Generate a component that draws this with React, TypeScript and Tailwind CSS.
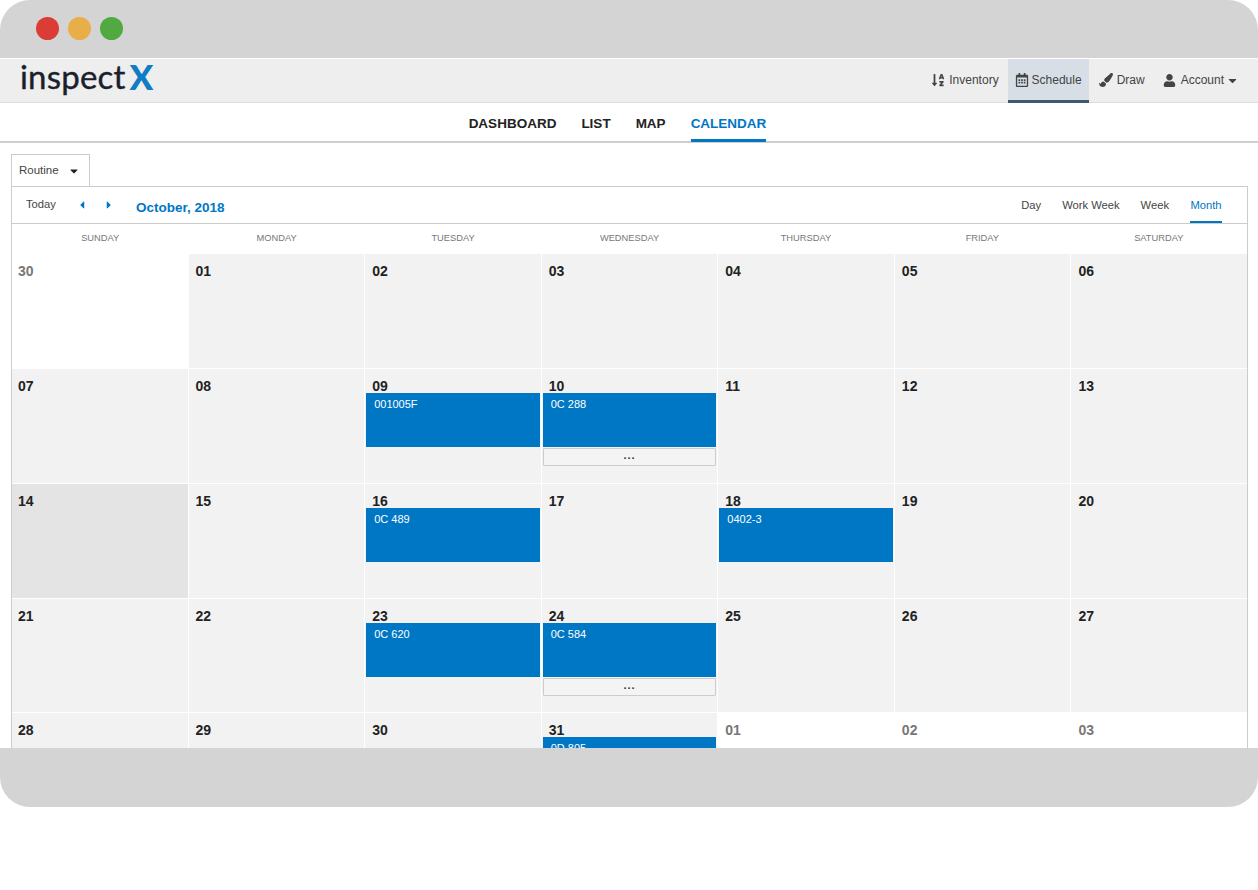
import { FaSortAlphaDown, FaRegCalendarAlt, FaPaintBrush, FaUser, FaCaretDown, FaCaretLeft, FaCaretRight } from "react-icons/fa";

type Day = { label: string; muted?: boolean; white?: boolean; dark?: boolean; event?: string; more?: boolean };

const weekdays = ["SUNDAY", "MONDAY", "TUESDAY", "WEDNESDAY", "THURSDAY", "FRIDAY", "SATURDAY"];

const days: Day[] = [
  { label: "30", muted: true, white: true },
  { label: "01" }, { label: "02" }, { label: "03" }, { label: "04" }, { label: "05" }, { label: "06" },
  { label: "07" }, { label: "08" },
  { label: "09", event: "001005F" },
  { label: "10", event: "0C 288", more: true },
  { label: "11" }, { label: "12" }, { label: "13" },
  { label: "14", dark: true }, { label: "15" },
  { label: "16", event: "0C 489" },
  { label: "17" },
  { label: "18", event: "0402-3" },
  { label: "19" }, { label: "20" },
  { label: "21" }, { label: "22" },
  { label: "23", event: "0C 620" },
  { label: "24", event: "0C 584", more: true },
  { label: "25" }, { label: "26" }, { label: "27" },
  { label: "28" }, { label: "29" }, { label: "30" },
  { label: "31", event: "0D 805" },
  { label: "01", muted: true, white: true },
  { label: "02", muted: true, white: true },
  { label: "03", muted: true, white: true },
];

const DayCell = ({ day, first }: { day: Day; first: boolean }) => {
  const bg = day.white ? "bg-white" : day.dark ? "bg-[#e4e4e4]" : "bg-[#f2f2f2]";
  return (
    <div className={`h-[113.85px] ${bg} px-px`}>
      <div
        className={`${first ? "pl-[5px]" : "pl-[6px]"} pt-[10px] h-[24px] text-[14px] leading-[14px] font-bold ${
          day.muted ? "text-[#777777]" : "text-[#222222]"
        }`}
      >
        {day.label}
      </div>
      {day.event && (
        <div className="h-[54px] bg-[#0077c5] pl-[8px] pt-[4px] text-[11px] leading-[14px] text-white">{day.event}</div>
      )}
      {day.more && (
        <div className="mt-px h-[18px] flex items-center justify-center border border-[#cccccc] bg-[#f4f4f4] rounded-[1px] text-[11px] font-bold tracking-[1px] text-[#333333] leading-none pb-[3px]">
          ...
        </div>
      )}
    </div>
  );
};

export default function App() {
  return (
    <div className="w-[1258px] h-[890px] bg-white font-['Liberation_Sans',Arial,sans-serif]">
      <div className="h-[807px] rounded-[30px] overflow-hidden flex flex-col bg-white">
        {/* window chrome */}
        <div className="h-[58px] shrink-0 bg-[#d4d4d4] flex items-center gap-[9px] pl-[36px] pb-[2px]">
          <span className="w-[23px] h-[23px] rounded-full bg-[#dc3c36]" />
          <span className="w-[23px] h-[23px] rounded-full bg-[#e8ae47]" />
          <span className="w-[23px] h-[23px] rounded-full bg-[#50aa3f]" />
        </div>

        {/* app header */}
        <div className="h-[45px] shrink-0 bg-[#eeeeee] border-t border-white border-b border-b-[#dddddd] flex items-stretch justify-between text-[#444444] text-[12px]">
          <div className="pl-[20px] flex items-start select-none">
            <span className="font-['Lato',sans-serif] text-[33px] leading-[38px] -mt-[2px] text-[#1a1f2b] tracking-[0.2px] [-webkit-text-stroke:0.4px_#1a1f2b]">inspect</span>
            <span className="font-['Lato',sans-serif] font-black text-[35px] leading-[36px] text-[#0f7cc4] ml-[4px] -mt-[1px]">X</span>
          </div>
          <div className="flex items-stretch pr-[19px]">
            <div className="flex items-center gap-[4px] pr-[9px] pb-px">
              <FaSortAlphaDown className="text-[14px]" />
              <span>Inventory</span>
            </div>
            <div className="flex items-center gap-[3px] w-[81px] justify-center bg-[#d8dee6] border-b-[3px] border-[#3f5a70] pt-[1px] -mb-px">
              <FaRegCalendarAlt className="text-[14px]" />
              <span>Schedule</span>
            </div>
            <div className="flex items-center gap-[4px] pl-[10px] pr-[18px] pb-px">
              <FaPaintBrush className="text-[14px]" />
              <span>Draw</span>
            </div>
            <div className="flex items-center gap-[5px] pb-px">
              <FaUser className="text-[13px]" />
              <span>Account</span>
              <FaCaretDown className="text-[13px] -ml-[3px]" />
            </div>
          </div>
        </div>

        {/* tabs */}
        <div className="h-[40px] shrink-0 border-b-2 border-[#cfcfcf] flex justify-center gap-[25px] pr-[23px] text-[13.5px] font-bold text-[#222222]">
          <span className="pt-[13px] leading-[16px]">DASHBOARD</span>
          <span className="pt-[13px] leading-[16px]">LIST</span>
          <span className="pt-[13px] leading-[16px]">MAP</span>
          <span className="pt-[13px] leading-[16px] text-[#0077c5] h-[39px] border-b-[3px] border-[#0077c5]">CALENDAR</span>
        </div>

        {/* calendar area */}
        <div className="flex-1 min-h-0 overflow-hidden pl-[11px] pr-[10px] pt-[11px] bg-white">
          <div className="w-[79px] h-[33px] border border-[#cccccc] flex items-center justify-between pl-[7px] pr-[9px] text-[11.5px] text-[#444444] -mb-px">
            <span>Routine</span>
            <FaCaretDown className="text-[12px] text-[#222222]" />
          </div>
          <div className="border border-[#cccccc] border-b-0">
            <div className="h-[37px] border-b border-[#cccccc] flex items-stretch justify-between text-[11.2px] text-[#444444]">
              <div className="flex items-center pl-[14px]">
                <span className="w-[30px] pb-[1px]">Today</span>
                <FaCaretLeft className="ml-[20px] text-[12px] text-[#0077c5]" />
                <FaCaretRight className="ml-[15px] text-[12px] text-[#0077c5]" />
                <span className="ml-[21px] pt-[6px] text-[13.5px] font-bold text-[#0077c5]">October, 2018</span>
              </div>
              <div className="flex items-center gap-[21px] pr-[25px]">
                <span className="pt-[1px]">Day</span>
                <span className="pt-[1px]">Work Week</span>
                <span className="pt-[1px]">Week</span>
                <span className="pt-[3px] h-full w-[32px] flex items-center justify-center text-[#0077c5] border-b-[2px] border-[#0077c5]">Month</span>
              </div>
            </div>
            <div className="h-[30px] grid grid-cols-7 items-center text-center text-[9.3px] text-[#777777]">
              {weekdays.map((d) => (
                <span key={d}>{d}</span>
              ))}
            </div>
            <div className="grid grid-cols-7 gap-px bg-white">
              {days.map((day, i) => (
                <DayCell key={i} day={day} first={i % 7 === 0} />
              ))}
            </div>
          </div>
        </div>

        <div className="h-[59px] shrink-0 bg-[#d4d4d4]" />
      </div>
    </div>
  );
}
